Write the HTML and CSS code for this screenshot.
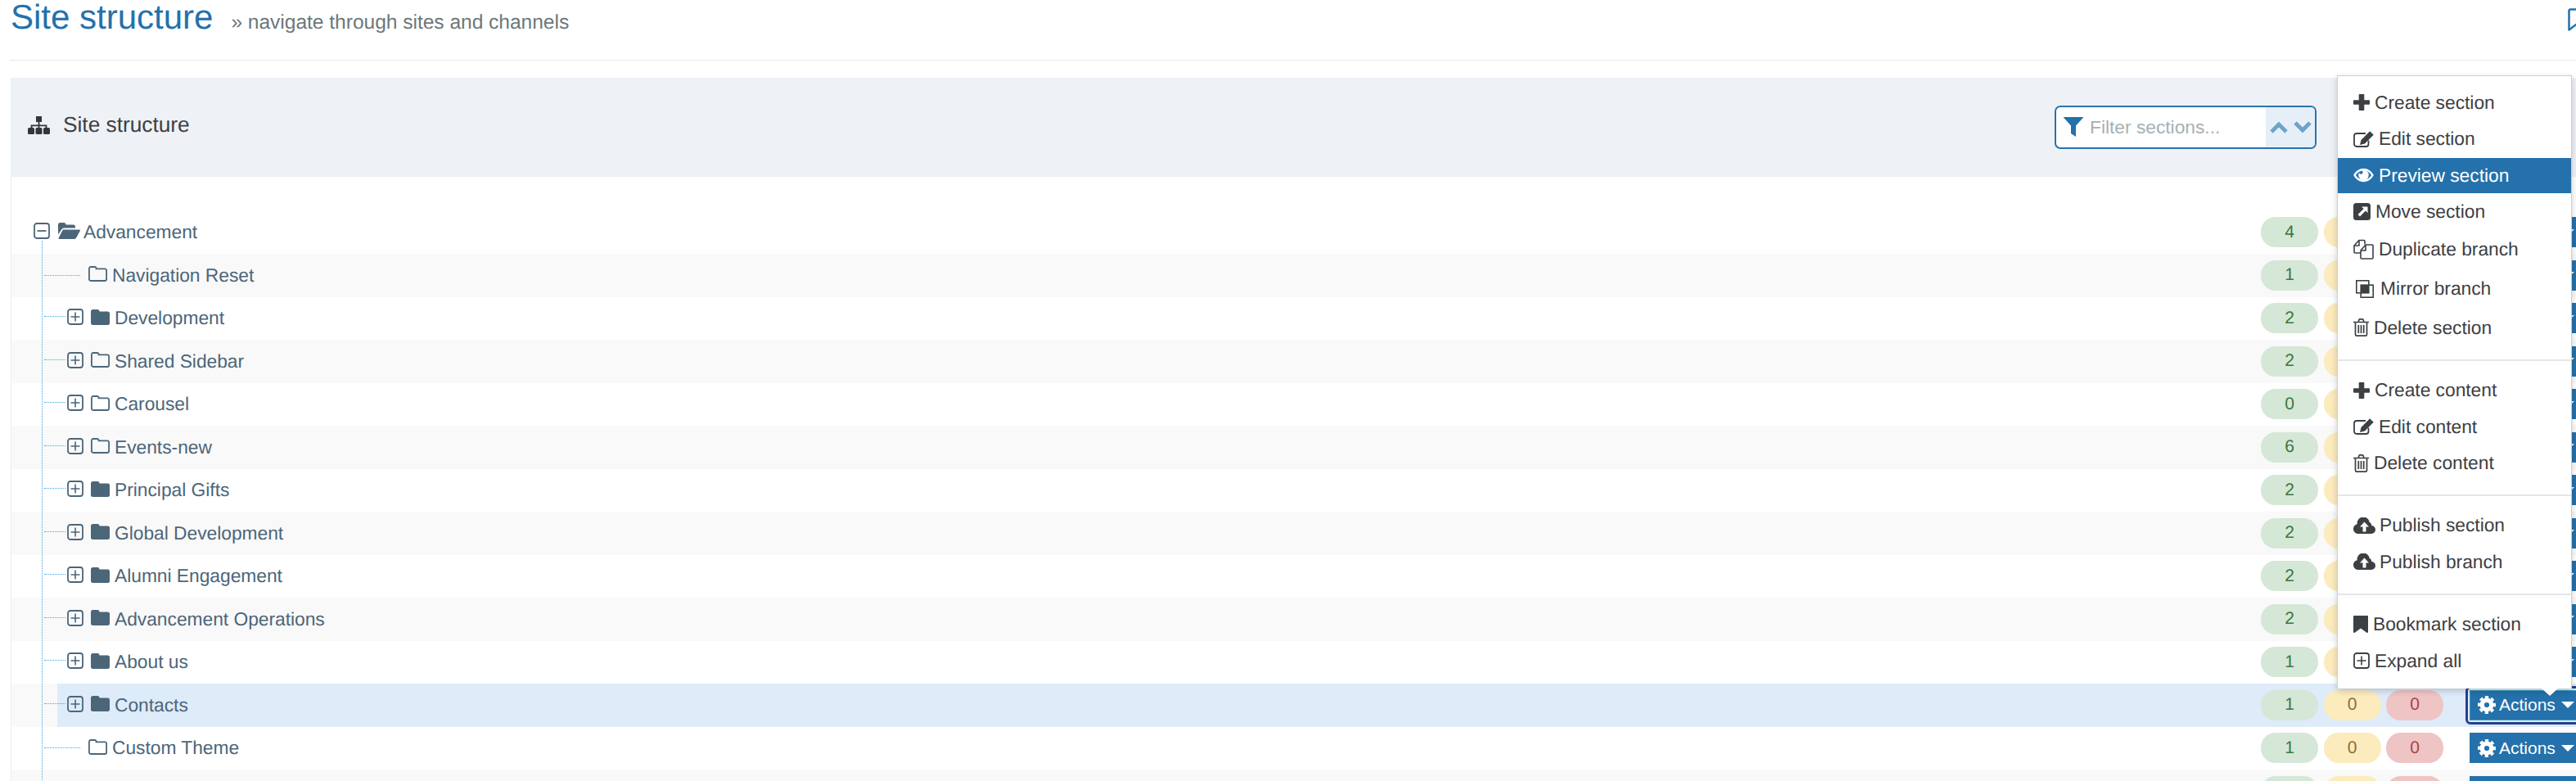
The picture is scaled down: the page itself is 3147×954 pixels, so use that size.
FILE: index.html
```html
<!DOCTYPE html>
<html lang="en">
<head>
<meta charset="UTF-8">
<title>Site structure</title>
<link rel="stylesheet" href="styles.css">
</head>
<body>
<svg class="sprite" xmlns="http://www.w3.org/2000/svg">
  <symbol id="i-folder" viewBox="0 0 23 19"><path d="M2.5 0h5.500a2.500 2.500 0 0 1 2.500 2.500h10a2.500 2.500 0 0 1 2.500 2.500v11.500a2.500 2.500 0 0 1-2.500 2.500h-18a2.500 2.500 0 0 1-2.500-2.500v-14a2.500 2.500 0 0 1 2.500-2.500z"/></symbol>
  <symbol id="i-folder-o" viewBox="0 0 23 19"><path fill="none" stroke="currentColor" stroke-width="1.800" d="M2.800 1h4.800a2 2 0 0 1 2 2.300h10.600a1.900 1.900 0 0 1 1.900 1.900v10.900a1.900 1.900 0 0 1-1.900 1.900h-17.400a1.900 1.900 0 0 1-1.900-1.900v-13.200a1.900 1.900 0 0 1 1.900-1.900z"/></symbol>
  <symbol id="i-folder-open" viewBox="0 0 27 20"><path d="M0 14.500v-12a2.500 2.500 0 0 1 2.500-2.500h4.500a2.500 2.500 0 0 1 2.500 2.500h9a2.500 2.500 0 0 1 2.500 2.500v1.500h-13.500a4 4 0 0 0-3.500 2z"/><path d="M5.800 8.500h20.200a1 1 0 0 1 .8 1.500l-4.700 8.500a3 3 0 0 1-2.600 1.500h-18a1 1 0 0 1-.8-1.500z"/></symbol>
  <symbol id="i-plus-box" viewBox="0 0 20 20"><rect x="1" y="1" width="18" height="18" rx="3" fill="none" stroke="currentColor" stroke-width="1.800"/><path d="M4.500 10h11M10 4.500v11" fill="none" stroke="currentColor" stroke-width="1.600"/></symbol>
  <symbol id="i-minus-box" viewBox="0 0 20 20"><rect x="1" y="1" width="18" height="18" rx="3" fill="none" stroke="currentColor" stroke-width="1.800"/><path d="M4.500 10h11" fill="none" stroke="currentColor" stroke-width="1.800"/></symbol>
  <symbol id="i-cog" viewBox="0 0 22 22"><circle cx="11" cy="11" r="5.800" fill="none" stroke="currentColor" stroke-width="5.400"/><circle cx="11" cy="11" r="9.500" fill="none" stroke="currentColor" stroke-width="3" stroke-dasharray="4.200 3.262" transform="rotate(-102.700 11 11)"/></symbol>
  <symbol id="i-plus" viewBox="0 0 20 20"><path d="M7.500 0h5a.8.8 0 0 1 .8.800v6.400h5.900a.8.8 0 0 1 .8.800v4a.8.8 0 0 1-.8.800h-5.900v6.400a.8.8 0 0 1-.8.800h-5a.8.8 0 0 1-.8-.8v-6.400h-5.900a.8.8 0 0 1-.8-.8v-4a.8.8 0 0 1 .8-.8h5.900v-6.400a.8.8 0 0 1 .8-.8z"/></symbol>
  <symbol id="i-edit" viewBox="0 0 25 20"><path fill="none" stroke="currentColor" stroke-width="1.800" d="M18.500 11.500v4.500a3 3 0 0 1-3 3h-11.500a3 3 0 0 1-3-3v-10a3 3 0 0 1 3-3h11"/><path d="M20.200 .3l4.500 4.500-10.700 10.700-6 1.500 1.500-6z"/></symbol>
  <symbol id="i-eye" viewBox="0 0 26 18"><path fill-rule="evenodd" d="M13 .5c5.300 0 10 3.200 12.800 8.500-2.800 5.300-7.500 8.500-12.800 8.500s-10-3.200-12.800-8.500c2.800-5.300 7.500-8.500 12.800-8.500zm0 2.500c-4 0-7.600 2.300-9.900 6 2.300 3.700 5.900 6 9.900 6s7.600-2.300 9.900-6c-2.300-3.700-5.900-6-9.900-6z"/><path d="M13 2.500a6.500 6.500 0 1 1-6.500 6.500c0-1.100.3-2.200.8-3.100a2.400 2.400 0 1 0 3.400-2.800c.7-.4 1.500-.6 2.300-.6z"/></symbol>
  <symbol id="i-move" viewBox="0 0 21 21"><path fill-rule="evenodd" d="M3.500 0h14a3.500 3.500 0 0 1 3.500 3.500v14a3.500 3.500 0 0 1-3.500 3.500h-14a3.500 3.500 0 0 1-3.500-3.500v-14a3.500 3.500 0 0 1 3.500-3.500zM10 4.500l2.600 2.600-7 6.900 2.400 2.400 6.900-7 2.600 2.600v-7.500z"/></symbol>
  <symbol id="i-files" viewBox="0 0 25 25"><g fill="none" stroke="currentColor" stroke-width="1.600" stroke-linejoin="round"><path d="M9 17h-7a1 1 0 0 1-1-1v-8l6-6.500h6a1 1 0 0 1 1 1v4"/><path d="M7 1.500v6.500h-6"/><path d="M10 24a1 1 0 0 1-1-1v-9l6-7h8a1 1 0 0 1 1 1v15a1 1 0 0 1-1 1z"/><path d="M15 7v7h-6"/></g></symbol>
  <symbol id="i-clone" viewBox="0 0 22 22"><rect x=".8" y=".8" width="15" height="15" fill="none" stroke="currentColor" stroke-width="1.600"/><rect x="6.200" y="6.200" width="15" height="15" fill="none" stroke="currentColor" stroke-width="1.600"/><rect x="6" y="6" width="10" height="10"/></symbol>
  <symbol id="i-trash" viewBox="0 0 19 22"><g fill="none" stroke="currentColor" stroke-width="1.700"><path d="M0 4.500h19M2.500 4.500v15a1.700 1.700 0 0 0 1.700 1.700h10.600a1.700 1.700 0 0 0 1.700-1.700v-15M6 4.500l1-3a1 1 0 0 1 1-.7h3a1 1 0 0 1 1 .7l1 3"/><path d="M6.300 8v10M9.500 8v10M12.700 8v10"/></g></symbol>
  <symbol id="i-cloud" viewBox="0 0 27 20"><path fill-rule="evenodd" d="M6 20a6 6 0 0 1-1.300-11.860a7.500 7.500 0 0 1 15.100-2.140a3.500 3.500 0 0 1 2.200 4a5 5 0 0 1 0 10zM13.500 5.500l-5.500 6h3.500v6h4v-6h3.500z"/></symbol>
  <symbol id="i-bookmark" viewBox="0 0 18 21"><path d="M1 0h16a1 1 0 0 1 1 1v19a1 1 0 0 1-1.700.7l-7.300-5.200-7.300 5.200a1 1 0 0 1-1.700-.7v-19a1 1 0 0 1 1-1z"/></symbol>
</svg>

<div class="page">
  <div class="page-head">
    <h1 class="page-title">Site structure</h1>
    <span class="page-sub">» navigate through sites and channels</span>
    <svg class="page-mark" width="24" height="29" viewBox="0 0 24 29"><path d="M3 1.500h18a1.500 1.500 0 0 1 1.500 1.500v23.500l-10.500-8-10.500 8v-23.500a1.500 1.500 0 0 1 1.500-1.500z" fill="none" stroke="currentColor" stroke-width="2.500" stroke-linejoin="round"/></svg>
  </div>

  <div class="panel">
    <div class="panel-head">
      <svg class="panel-ico" width="27" height="22" viewBox="0 0 27 22"><path d="M10 0h7v7h-2.600v3.500h9v3.500h-1.900v-1.700h-7.100v1.700h-1.800v-1.700h-7.100v1.700h-1.900v-3.500h9v-3.500h-2.600z"/><rect y="14" width="8" height="8" rx="1.500"/><rect x="9.500" y="14" width="8" height="8" rx="1.500"/><rect x="19" y="14" width="8" height="8" rx="1.500"/></svg>
      <span class="panel-title">Site structure</span>
      <div class="filter">
        <svg class="filter-ico" width="24" height="24" viewBox="0 0 24 24"><path d="M.5 0h23a.5.5 0 0 1 .4.8l-8.900 9.700v13.500l-6-4v-9.500l-8.900-9.700a.5.5 0 0 1 .4-.8z"/></svg>
        <input class="filter-input" type="text" placeholder="Filter sections...">
        <div class="filter-btns">
          <svg width="22" height="15" viewBox="0 0 22 15"><path d="M2 13l9-9 9 9" fill="none" stroke="currentColor" stroke-width="4.800"/></svg>
          <svg width="22" height="15" viewBox="0 0 22 15"><path d="M2 2l9 9 9-9" fill="none" stroke="currentColor" stroke-width="4.800"/></svg>
        </div>
      </div>
    </div>

    <ul class="tree">
      <li class="tree-line"></li>
      <li class="row row-root">
        <svg class="toggle"><use href="#i-minus-box"/></svg>
        <svg class="folder-open"><use href="#i-folder-open"/></svg>
        <a class="node-name">Advancement</a>
        <div class="counts"><span class="badge ok">4</span><span class="badge warn">0</span><span class="badge bad">0</span></div>
        <button class="act"><svg class="act-cog"><use href="#i-cog"/></svg>Actions<span class="caret"></span></button>
      </li>
      <li class="row">
        <span class="link link-long"></span>
        <svg class="folder leaf-folder"><use href="#i-folder-o"/></svg>
        <a class="node-name">Navigation Reset</a>
        <div class="counts"><span class="badge ok">1</span><span class="badge warn">0</span><span class="badge bad">0</span></div>
        <button class="act"><svg class="act-cog"><use href="#i-cog"/></svg>Actions<span class="caret"></span></button>
      </li>
      <li class="row">
        <span class="link"></span>
        <svg class="toggle"><use href="#i-plus-box"/></svg>
        <svg class="folder"><use href="#i-folder"/></svg>
        <a class="node-name">Development</a>
        <div class="counts"><span class="badge ok">2</span><span class="badge warn">0</span><span class="badge bad">0</span></div>
        <button class="act"><svg class="act-cog"><use href="#i-cog"/></svg>Actions<span class="caret"></span></button>
      </li>
      <li class="row">
        <span class="link"></span>
        <svg class="toggle"><use href="#i-plus-box"/></svg>
        <svg class="folder"><use href="#i-folder-o"/></svg>
        <a class="node-name">Shared Sidebar</a>
        <div class="counts"><span class="badge ok">2</span><span class="badge warn">0</span><span class="badge bad">0</span></div>
        <button class="act"><svg class="act-cog"><use href="#i-cog"/></svg>Actions<span class="caret"></span></button>
      </li>
      <li class="row">
        <span class="link"></span>
        <svg class="toggle"><use href="#i-plus-box"/></svg>
        <svg class="folder"><use href="#i-folder-o"/></svg>
        <a class="node-name">Carousel</a>
        <div class="counts"><span class="badge ok">0</span><span class="badge warn">0</span><span class="badge bad">0</span></div>
        <button class="act"><svg class="act-cog"><use href="#i-cog"/></svg>Actions<span class="caret"></span></button>
      </li>
      <li class="row">
        <span class="link"></span>
        <svg class="toggle"><use href="#i-plus-box"/></svg>
        <svg class="folder"><use href="#i-folder-o"/></svg>
        <a class="node-name">Events-new</a>
        <div class="counts"><span class="badge ok">6</span><span class="badge warn">0</span><span class="badge bad">0</span></div>
        <button class="act"><svg class="act-cog"><use href="#i-cog"/></svg>Actions<span class="caret"></span></button>
      </li>
      <li class="row">
        <span class="link"></span>
        <svg class="toggle"><use href="#i-plus-box"/></svg>
        <svg class="folder"><use href="#i-folder"/></svg>
        <a class="node-name">Principal Gifts</a>
        <div class="counts"><span class="badge ok">2</span><span class="badge warn">0</span><span class="badge bad">0</span></div>
        <button class="act"><svg class="act-cog"><use href="#i-cog"/></svg>Actions<span class="caret"></span></button>
      </li>
      <li class="row">
        <span class="link"></span>
        <svg class="toggle"><use href="#i-plus-box"/></svg>
        <svg class="folder"><use href="#i-folder"/></svg>
        <a class="node-name">Global Development</a>
        <div class="counts"><span class="badge ok">2</span><span class="badge warn">0</span><span class="badge bad">0</span></div>
        <button class="act"><svg class="act-cog"><use href="#i-cog"/></svg>Actions<span class="caret"></span></button>
      </li>
      <li class="row">
        <span class="link"></span>
        <svg class="toggle"><use href="#i-plus-box"/></svg>
        <svg class="folder"><use href="#i-folder"/></svg>
        <a class="node-name">Alumni Engagement</a>
        <div class="counts"><span class="badge ok">2</span><span class="badge warn">0</span><span class="badge bad">0</span></div>
        <button class="act"><svg class="act-cog"><use href="#i-cog"/></svg>Actions<span class="caret"></span></button>
      </li>
      <li class="row">
        <span class="link"></span>
        <svg class="toggle"><use href="#i-plus-box"/></svg>
        <svg class="folder"><use href="#i-folder"/></svg>
        <a class="node-name">Advancement Operations</a>
        <div class="counts"><span class="badge ok">2</span><span class="badge warn">0</span><span class="badge bad">0</span></div>
        <button class="act"><svg class="act-cog"><use href="#i-cog"/></svg>Actions<span class="caret"></span></button>
      </li>
      <li class="row">
        <span class="link"></span>
        <svg class="toggle"><use href="#i-plus-box"/></svg>
        <svg class="folder"><use href="#i-folder"/></svg>
        <a class="node-name">About us</a>
        <div class="counts"><span class="badge ok">1</span><span class="badge warn">0</span><span class="badge bad">0</span></div>
        <button class="act"><svg class="act-cog"><use href="#i-cog"/></svg>Actions<span class="caret"></span></button>
      </li>
      <li class="row row-selected">
        <span class="link"></span>
        <svg class="toggle"><use href="#i-plus-box"/></svg>
        <svg class="folder"><use href="#i-folder"/></svg>
        <a class="node-name">Contacts</a>
        <div class="counts"><span class="badge ok">1</span><span class="badge warn">0</span><span class="badge bad">0</span></div>
        <button class="act act-focus"><svg class="act-cog"><use href="#i-cog"/></svg>Actions<span class="caret"></span></button>
      </li>
      <li class="row">
        <span class="link link-long"></span>
        <svg class="folder leaf-folder"><use href="#i-folder-o"/></svg>
        <a class="node-name">Custom Theme</a>
        <div class="counts"><span class="badge ok">1</span><span class="badge warn">0</span><span class="badge bad">0</span></div>
        <button class="act"><svg class="act-cog"><use href="#i-cog"/></svg>Actions<span class="caret"></span></button>
      </li>
      <li class="row">
        <span class="link link-long"></span>
        <div class="counts"><span class="badge ok"></span><span class="badge warn"></span><span class="badge bad"></span></div>
        <button class="act act-cut"><svg class="act-cog"><use href="#i-cog"/></svg></button>
      </li>
    </ul>
  </div>
</div>

<!-- open actions menu of the Contacts row -->
<div class="menu">
  <a class="menu-item"><svg class="mi" width="20" height="20"><use href="#i-plus"/></svg>Create section</a>
  <a class="menu-item"><svg class="mi" width="25" height="20"><use href="#i-edit"/></svg>Edit section</a>
  <a class="menu-item active"><svg class="mi" width="25" height="18"><use href="#i-eye"/></svg>Preview section</a>
  <a class="menu-item"><svg class="mi" width="21" height="21"><use href="#i-move"/></svg>Move section</a>
  <a class="menu-item item-dup"><svg class="mi" width="25" height="25"><use href="#i-files"/></svg>Duplicate branch</a>
  <a class="menu-item item-mirror"><svg class="mi" width="22" height="22"><use href="#i-clone"/></svg>Mirror branch</a>
  <a class="menu-item"><svg class="mi" width="19" height="22"><use href="#i-trash"/></svg>Delete section</a>
  <div class="menu-sep"></div>
  <a class="menu-item"><svg class="mi" width="20" height="20"><use href="#i-plus"/></svg>Create content</a>
  <a class="menu-item"><svg class="mi" width="25" height="20"><use href="#i-edit"/></svg>Edit content</a>
  <a class="menu-item"><svg class="mi" width="19" height="22"><use href="#i-trash"/></svg>Delete content</a>
  <div class="menu-sep"></div>
  <a class="menu-item"><svg class="mi mi-wide" width="27" height="20"><use href="#i-cloud"/></svg>Publish section</a>
  <a class="menu-item"><svg class="mi mi-wide" width="27" height="20"><use href="#i-cloud"/></svg>Publish branch</a>
  <div class="menu-sep"></div>
  <a class="menu-item"><svg class="mi" width="18" height="21"><use href="#i-bookmark"/></svg>Bookmark section</a>
  <a class="menu-item"><svg class="mi" width="20" height="20"><use href="#i-plus-box"/></svg>Expand all</a>
</div>
</body>
</html>
```
FILE: styles.css
```css
:root {
  --blue: #2471ab;
  --tree-text: #4c6679;
  --menu-text: #3d4043;
  --font-stack: "Liberation Sans", Arial, Helvetica, sans-serif;
}
* { box-sizing: border-box; }
html, body { margin: 0; height: 954px; overflow: hidden; background: #fff; }
body { font-family: var(--font-stack); color: var(--menu-text); position: relative; text-rendering: geometricPrecision; }
.sprite { display: none; }

.page { margin-left: 13px; width: 3157px; }
.page-head { display: flex; align-items: baseline; height: 74px; width: 3134px; margin-bottom: 21px; border-bottom: 1px dotted #cfd4d8; }
.page-title { margin: 0; font-size: 42px; line-height: 42px; font-weight: 400; color: var(--blue); }
.page-sub { margin-left: 22px; font-size: 24.5px; color: #6d777b; }
.page-mark { flex-shrink: 0; align-self: flex-start; margin: 10px -14px 0 auto; color: var(--blue); }

.panel { border-left: 1px solid #ebedf0; }
.panel-head { display: flex; align-items: center; height: 121px; padding: 0 340px 0 20px; background: #eef1f6; border-bottom: 1px solid #eceff3; }
.panel-ico { fill: #33373a; flex-shrink: 0; margin-bottom: 5px; }
.panel-title { margin: 0 0 5px 16px; font-size: 26.25px; color: #3c4043; }
.filter { display: flex; align-items: center; margin-left: auto; width: 320px; height: 53px; background: #fff; border: 2px solid #2a74a9; border-radius: 7px; overflow: hidden; }
.filter-ico { fill: var(--blue); margin-left: 9px; flex-shrink: 0; }
.filter-input { flex: 1; min-width: 0; height: 100%; border: 0; outline: 0; padding: 0 0 0 8px; background: transparent; font: 22.75px var(--font-stack); color: #333; }
.filter-input::placeholder { color: #a5b1b4; opacity: 1; }
.filter-btns { display: flex; align-items: center; justify-content: center; gap: 7px; width: 60px; height: 100%; background: #e6eff8; color: #6fa3c7; }

.tree { position: relative; list-style: none; margin: 0; padding: 41.5px 0 0; }
.tree-line { position: absolute; left: 36.5px; top: 78px; bottom: 0; border-left: 1px dotted #3fa9e5; }
.row { display: flex; align-items: center; height: 52.5px; padding: 0 15px 0 40px; color: var(--tree-text); font-size: 22.75px; }
.row:nth-child(odd) { background: #f9f9f9; }
.row-root { padding-left: 27px; background: #fff; }
.row-selected:nth-child(n) { background: linear-gradient(to right, #f9f9f9 56px, #deebf9 56px); }

.link { width: 26px; height: 0; margin: -4px 2px 0 0; border-top: 1px dotted #3fa9e5; }
.link-long { width: 44px; margin: 0; }
.toggle { width: 20px; height: 20px; margin: -3px 9px 0 0; color: var(--tree-text); flex-shrink: 0; }
.folder { width: 23px; height: 19px; margin: -3px 6px 0 0; fill: var(--tree-text); color: var(--tree-text); flex-shrink: 0; }
.leaf-folder { margin-left: 10px; margin-right: 6px; }
.folder-open { width: 27px; height: 20px; margin: -3px 4px 0 1px; fill: var(--tree-text); flex-shrink: 0; }
.node-name { white-space: nowrap; }

.counts { display: flex; gap: 6.5px; margin-left: auto; }
.badge { display: flex; align-items: center; justify-content: center; width: 70px; height: 37px; border-radius: 18px; font-size: 21px; }
.ok { background: #d5e7d6; color: #3c763d; }
.warn { background: #fcebbd; color: #8a6d3b; }
.bad { background: #efc4c4; color: #a94442; }

.act { display: flex; align-items: center; margin-left: 32px; width: 138px; height: 37px; padding: 0 0 0 10px; border: 0; background: var(--blue); color: #fff; font: 21px var(--font-stack); flex-shrink: 0; }
.act-focus { outline: 3px solid #2a3f8f; outline-offset: 2px; border-radius: 1px; box-shadow: inset 0 0 0 1px #38a0b8; }
.act-cog { width: 22px; height: 22px; margin-right: 4px; color: #fff; }
.caret { width: 0; height: 0; margin-left: 7px; border-left: 8px solid transparent; border-right: 8px solid transparent; border-top: 8px solid #fff; }

.menu { position: absolute; left: 2855px; top: 92px; width: 287px; height: 749px; padding: 10px 0 0; background: #fff; border: 1px solid #ccd0d3; border-bottom: 0; box-shadow: 0 3px 8px rgba(0, 0, 0, .18); font-size: 22.75px; }
.menu::after { content: ""; position: absolute; left: 249px; bottom: -9px; border-left: 10px solid transparent; border-right: 10px solid transparent; border-top: 9px solid #fff; }
.menu-item { display: flex; align-items: center; height: 44.4px; padding-left: 19px; color: var(--menu-text); white-space: nowrap; }
.mi { fill: currentColor; margin-right: 6px; flex-shrink: 0; }
.mi-wide { margin-right: 5px; }
.menu-item.active { height: 43px; margin: 1px 0; background: var(--blue); color: #fff; }
.item-dup { height: 46px; }
.item-mirror { height: 51px; padding-left: 22px; }
.item-mirror .mi { margin-right: 8px; }
.menu-sep { height: 2px; margin: 16px 0 14px; background: #e6e6e6; }
```
